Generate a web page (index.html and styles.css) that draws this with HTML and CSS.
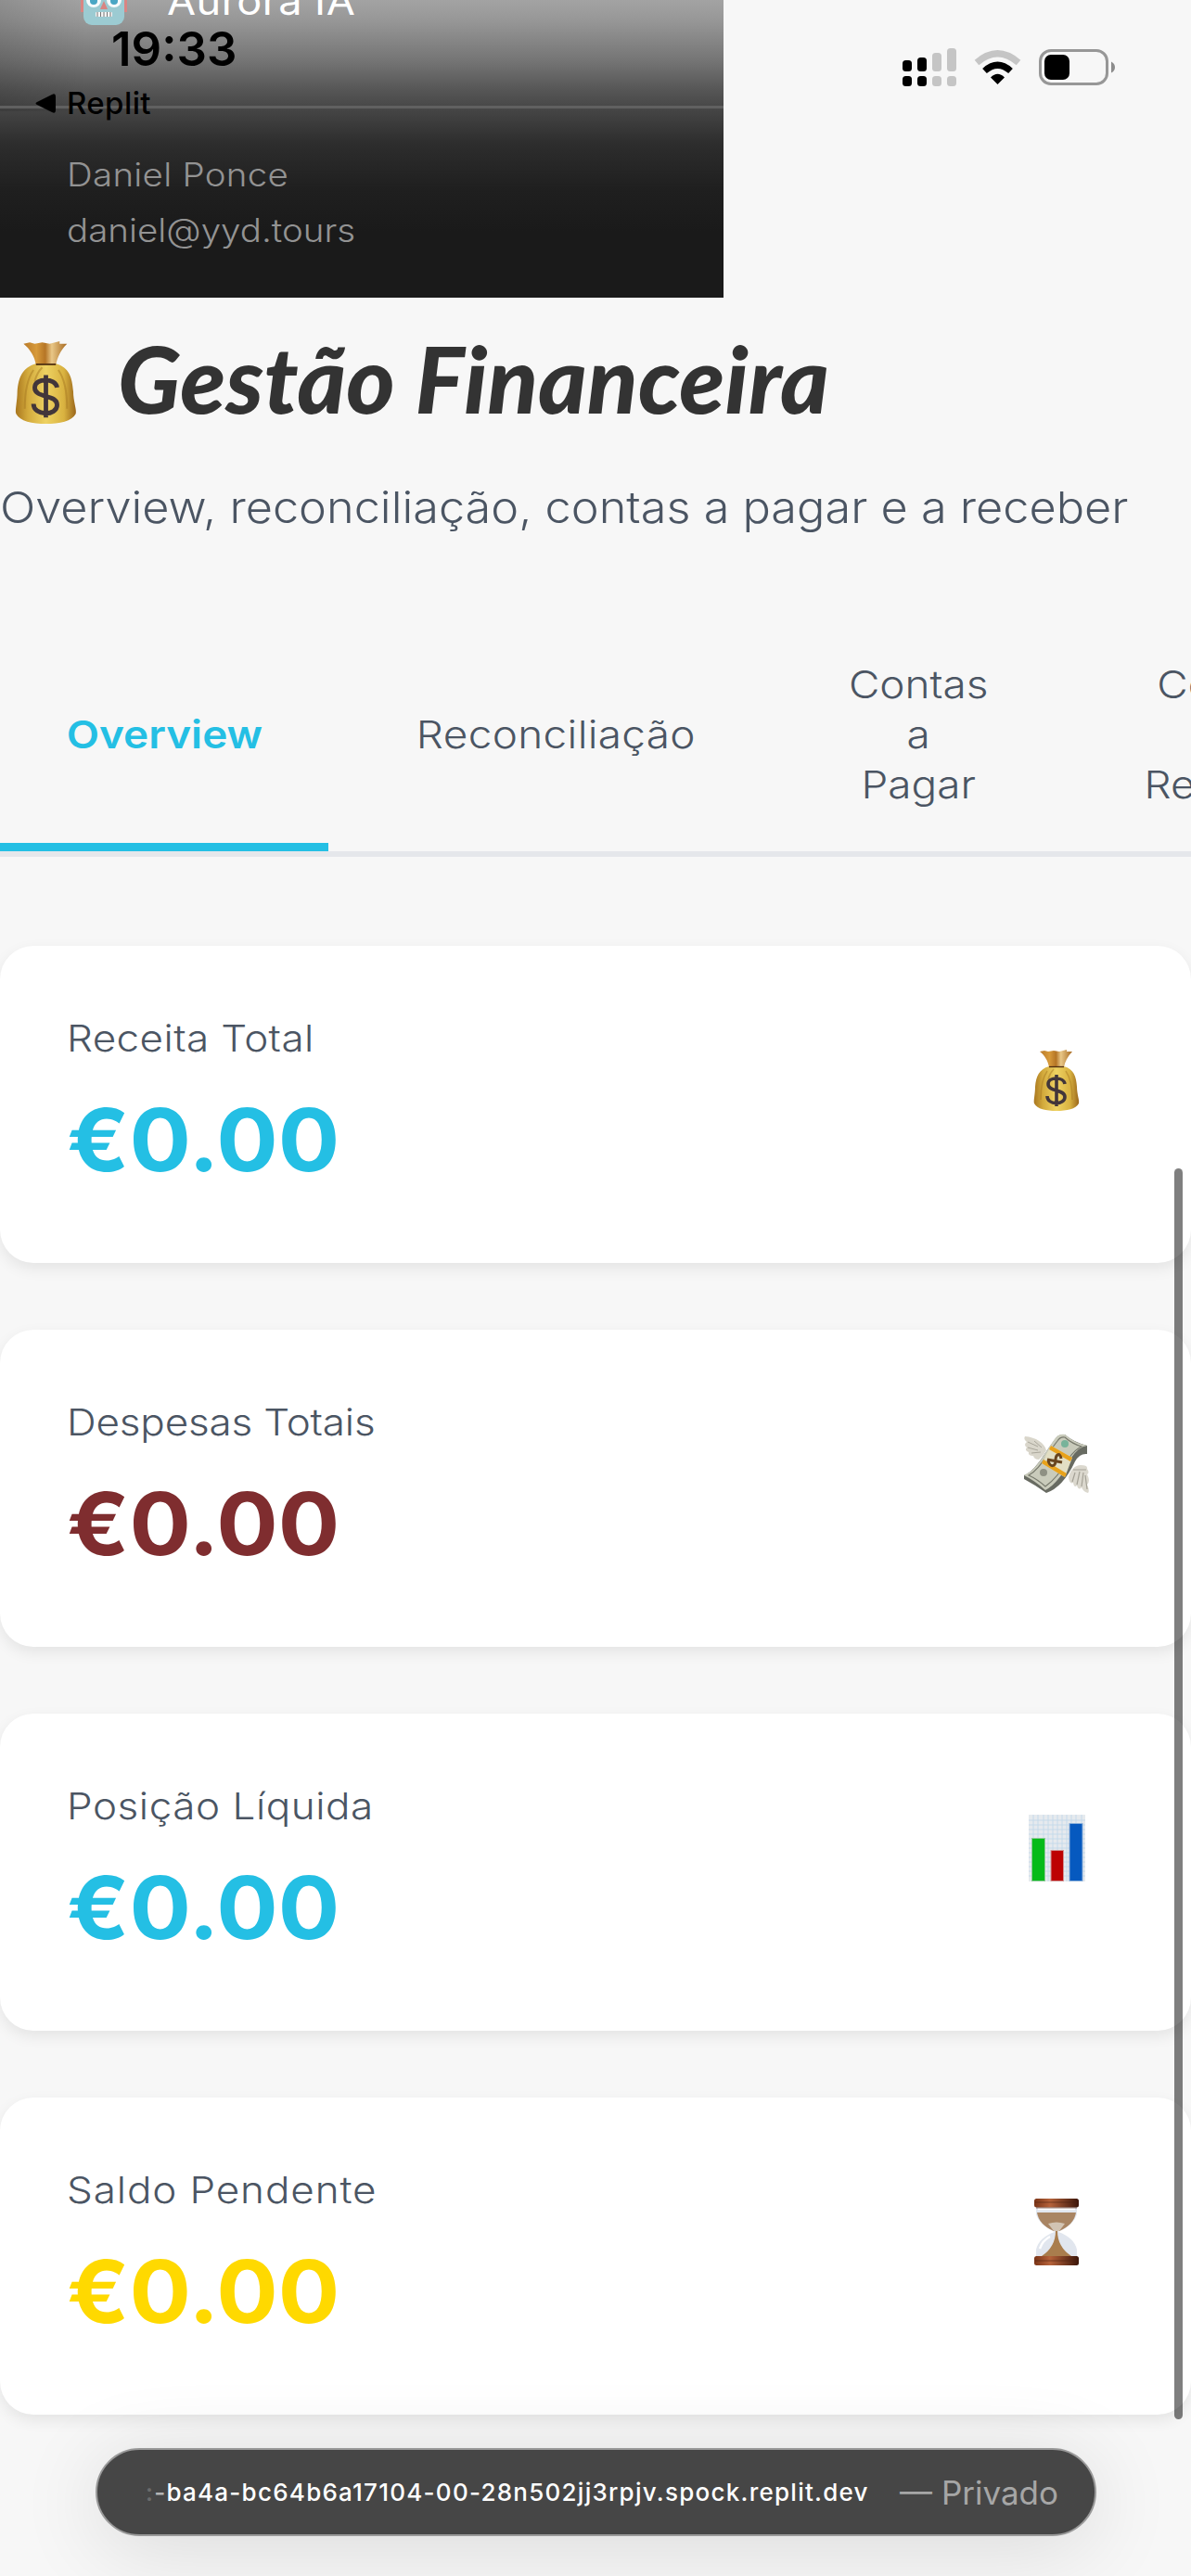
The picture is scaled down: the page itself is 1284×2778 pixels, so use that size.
FILE: index.html
```html
<!DOCTYPE html>
<html lang="pt">
<head>
<meta charset="utf-8">
<title>Gestão Financeira</title>
<link rel="stylesheet" href="styles.css">
</head>
<body>
<svg class="defs" width="0" height="0" aria-hidden="true">
  <defs>
    <linearGradient id="gold" x1="0" x2="1">
      <stop offset="0" stop-color="#a9771f"/><stop offset=".2" stop-color="#d3aa3c"/><stop offset=".5" stop-color="#eed262"/><stop offset=".8" stop-color="#d9b240"/><stop offset="1" stop-color="#9a661b"/>
    </linearGradient>
    <linearGradient id="neck" x1="0" x2="1">
      <stop offset="0" stop-color="#b97a2a"/><stop offset=".3" stop-color="#d79a3a"/><stop offset=".5" stop-color="#b57526"/><stop offset=".65" stop-color="#e9c787"/><stop offset="1" stop-color="#a7691f"/>
    </linearGradient>
    <linearGradient id="wood" x1="0" x2="1">
      <stop offset="0" stop-color="#7a3417"/><stop offset=".35" stop-color="#b5623a"/><stop offset="1" stop-color="#3b1509"/>
    </linearGradient>
    <symbol id="bag" viewBox="0 0 50 66" preserveAspectRatio="none">
      <path d="M7 2 12 1 16 2 22 1 28 2 36 0 36 2 42 2C37 7 34 13 33 19H17C16 12 12 6 7 2Z" fill="url(#neck)"/>
      <path d="M17 18H33C44 21 46 29 47 40C47 48 50 55 49 58C46 64 36 66 25 66S4 64 1 58C0 55 2 48 2 40C3 29 6 21 17 18Z" fill="url(#gold)"/>
      <path d="M15 23C10 30 8 40 8 54M22 21C18 25 17 28 16 32M35 23C40 30 42 40 42 54" fill="none" stroke="#a87a22" stroke-opacity=".5" stroke-width="1.5"/>
      <path d="M17 18.500H33" stroke="#4d2c10" stroke-width="1.300"/>
      <path d="M34 37C33 29 16 29 16 37C16 46 34 42 34 51C34 60 15 60 15 50M25 27V61" fill="none" stroke="#42363a" stroke-width="3.600"/>
    </symbol>
  </defs>
</svg>

<aside class="sidebar">
  <div class="nav-link">
    <svg class="robot" viewBox="0 0 50 54">
      <path d="M0 16H4V39H0ZM46 16H50V39H46Z" fill="#d98583"/>
      <rect x="3" y="4" width="44" height="49" rx="9" fill="#9ccbd2"/>
      <circle cx="14" cy="26" r="8" fill="#f7fbfc"/><circle cx="36" cy="26" r="8" fill="#f7fbfc"/>
      <circle cx="14" cy="27" r="4" fill="#4aa6c4"/><circle cx="36" cy="27" r="4" fill="#4aa6c4"/>
      <path d="M25 27 29 36H21Z" fill="#d88582"/>
      <rect x="16" y="39" width="18" height="5" rx="1" fill="#f4f4f4"/>
      <path d="M18 39V44M21.500 39V44M25 39V44M28.500 39V44M32 39V44" stroke="#777" stroke-width="1"/>
    </svg>
    <span class="nav-text wide">Aurora IA</span>
  </div>
  <div class="user">
    <div class="wide user-name">Daniel Ponce</div>
    <div class="wide">daniel@yyd.tours</div>
  </div>
</aside>

<main>
  <header class="page-head">
    <h1><svg class="title-icon"><use href="#bag"/></svg><span class="title-text">Gestão Financeira</span></h1>
    <p class="subtitle">Overview, reconciliação, contas a pagar e a receber</p>
  </header>

  <nav class="tabs">
    <a class="tab tab-overview active"><span>Overview</span></a>
    <a class="tab tab-recon"><span>Reconciliação</span></a>
    <a class="tab tab-pay"><span>Contas<br>a<br>Pagar</span></a>
    <a class="tab tab-receive"><span>Contas<br>a<br>Receber</span></a>
  </nav>

  <section class="cards">
    <article class="card">
      <div><div class="label wide">Receita Total</div><div class="value cyan">€0.00</div></div>
      <div class="icon"><svg width="50" height="66"><use href="#bag"/></svg></div>
    </article>
    <article class="card">
      <div><div class="label wide expenses">Despesas Totais</div><div class="value red">€0.00</div></div>
      <div class="icon">
        <svg width="72" height="66" viewBox="0 0 72 66">
          <path d="M1 45C14 40 22 22 36 4Q38 1 45 1Q54 9 69 13V22Q61 21 56 30Q43 58 25 64Q14 56 1 49Z" fill="#686b62"/>
          <path d="M1 45C15 39 21 24 34 6Q38 0 45 1Q55 10 69 13Q60 14 52 26Q39 53 24 61Q13 51 1 45Z" fill="#c9cbbb"/>
          <path d="M6 45C18 38 23 26 37 8Q40 3 45 4Q53 11 63 14Q56 17 49 27Q37 48 24 57Q15 49 6 45Z" fill="none" stroke="#77796c" stroke-width="1.200"/>
          <circle cx="45" cy="11" r="4" fill="#78b39a"/><circle cx="22" cy="42" r="4" fill="#8e9083"/>
          <path d="M30 13 53 26 45 47 20 32Z" fill="#e3dfc4"/>
          <path d="M30 13 53 26 51 30 28 17ZM22 28 47 43 45 47 20 32Z" fill="#e8a21b"/>
          <path d="M41 27C40 20 35 22 35 29S29 37 27 29M26 28 42 31" fill="none" stroke="#68451f" stroke-width="3"/>
          <path d="M25 18C23 10 14 4 2 3Q0 6 4 9Q0 12 4 15Q1 18 6 20Q5 24 11 24Q12 28 17 28L22 23Z" fill="#d9d6cb"/>
          <path d="M5 9 16 14M5 15 16 18M9 21 19 20M12 8 20 15" stroke="#aaa79b" stroke-width="1"/>
          <path d="M49 47C51 39 56 34 62 34Q70 34 69 38Q72 42 69 44Q73 51 69 55Q72 62 70 64Q65 63 63 58Q60 62 58 56Q55 59 54 53Q50 55 49 47Z" fill="#dbd8ce"/>
          <path d="M56 42 53 52M61 41 58 55M65 42 63 57M67 45 69 60M54 39 68 39" stroke="#a5a297" stroke-width="1.200"/>
        </svg>
      </div>
    </article>
    <article class="card">
      <div><div class="label wide position">Posição Líquida</div><div class="value cyan">€0.00</div></div>
      <div class="icon">
        <svg width="61" height="72" viewBox="0 0 61 72">
          <rect width="61" height="72" fill="#e6eaee"/>
          <path d="M0 6H61M0 11H61M0 16H61M0 21H61M0 26H61M0 31H61M0 36H61M0 41H61M0 46H61M0 51H61M0 56H61M0 61H61M0 66H61M5 0V72M10 0V72M16 0V72M21 0V72M26 0V72M31 0V72M36 0V72M41 0V72M46 0V72M51 0V72M57 0V72" stroke="#c3d9ea" stroke-width=".9"/>
          <rect x="3.500" y="25.500" width="14" height="46" fill="#05bb19" stroke="#8cc997"/>
          <rect x="24" y="38.500" width="13.500" height="33" fill="#bd0202" stroke="#cf9292"/>
          <rect x="44" y="9.500" width="14" height="62" fill="#0659bf" stroke="#8bb0da"/>
        </svg>
      </div>
    </article>
    <article class="card">
      <div><div class="label wide balance">Saldo Pendente</div><div class="value yellow">€0.00</div></div>
      <div class="icon">
        <svg width="50" height="72" viewBox="0 0 50 72">
          <path d="M3 9H47V17Q44 28 27 36Q44 42 47 55V63H3V55Q6 42 23 36Q6 28 3 17Z" fill="#e1e6ee"/>
          <path d="M4 15H46Q44 28 28 35H22Q6 28 4 15Z" fill="#a98563"/>
          <path d="M16 27Q25 24 34 27L28 35H22Z" fill="#d2c4b3"/>
          <path d="M24 35H26Q26 52 41 62H9Q24 52 24 35Z" fill="#a97d4d"/>
          <path d="M5 11H45M7 54Q10 45 18 41" stroke="#fff" stroke-width="2.500" fill="none"/>
          <rect x="1" y="0" width="48" height="9.500" rx="2.500" fill="url(#wood)"/>
          <rect x="1" y="62" width="48" height="10" rx="2.500" fill="url(#wood)"/>
          <path d="M3 10H47M2 4H48M2 67H48" stroke="#4c2112" stroke-opacity=".6" stroke-width="1.200"/>
        </svg>
      </div>
    </article>
  </section>
</main>

<div class="status">
  <div class="status-left">
    <div class="clock">19:33</div>
    <div class="back"><svg width="22" height="21" viewBox="0 0 22 21"><path d="M2 9 18 1Q22-1 22 3V18Q22 22 18 20L2 12Q-1 10.500 2 9Z"/></svg><span>Replit</span></div>
  </div>
  <svg class="status-icons" width="230" height="42" viewBox="0 0 230 42">
    <g><rect y="13" width="10" height="12" rx="3.500"/><rect x="16" y="10" width="10" height="15" rx="3.500"/><rect y="30" width="10" height="11" rx="3.500"/><rect x="16" y="30" width="10" height="11" rx="3.500"/></g>
    <g fill="#c5c5c5"><rect x="32" y="5" width="10" height="20" rx="3.500"/><rect x="48" width="10" height="25" rx="3.500"/><rect x="32" y="30" width="10" height="11" rx="3.500"/><rect x="48" y="30" width="10" height="11" rx="3.500"/></g>
    <path d="M80 15.500Q102.500-4 125 15.500" fill="none" stroke="#c5c5c5" stroke-width="7"/>
    <path d="M88.500 24.500Q102.500 12 116.500 24.500" fill="none" stroke="#000" stroke-width="7"/>
    <path d="M95 31.500Q102.500 24 110 31.500L102.500 39Z"/>
    <rect x="148.500" y="2.500" width="72" height="36" rx="11.500" fill="none" stroke="#979797" stroke-width="3"/>
    <rect x="153" y="7" width="27" height="27" rx="7"/>
    <path d="M225 14.500Q229 16.500 229 20.500T225 26.500Z" fill="#8c8c8c"/>
  </svg>
</div>
<div class="scrollbar"></div>
<div class="address">
  <span class="url"><span class="fade">:</span><span class="fade2">-</span>ba4a-bc64b6a17104-00-28n502jj3rpjv.spock.replit.dev</span>
  <span class="private">— Privado</span>
</div>
</body>
</html>
```

FILE: styles.css
```css
* { box-sizing: border-box; }

body {
  position: relative;
  margin: 0;
  width: 1284px;
  height: 2778px;
  overflow: hidden;
  background: #f7f7f7;
  color: #4b5563;
  font-family: Inter, "Liberation Sans", sans-serif;
}

.defs { position: absolute; }

svg { display: block; flex: none; }

.wide {
  width: fit-content;
  transform: scaleX(1.1);
  transform-origin: 0 0;
}

.sidebar {
  display: flex;
  flex-direction: column;
  justify-content: flex-end;
  width: 780px;
  height: 321px;
  overflow: hidden;
  background:
    linear-gradient(90deg, rgba(0, 0, 0, .12), transparent 12%) 0 0 / 100% 120px no-repeat,
    linear-gradient(#a3a3a3 0, #979797 22px, #757575 65px, #555 98px, #444 120px, #2d2d2d 155px, #1f1f1f 205px, #1a1a1a 250px);
}

.nav-link {
  display: flex;
  flex: none;
  align-items: flex-end;
  gap: 43px;
  height: 54px;
  margin-bottom: 86px;
  padding-left: 87px;
}

.robot { width: 50px; height: 54px; }

.nav-text {
  color: #fff;
  font-size: 41px;
  line-height: 54px;
  letter-spacing: .4px;
}

.user {
  flex: none;
  height: 207px;
  padding: 41px 72px;
  border-top: 3px solid #606060;
  color: #939393;
  font-size: 35px;
  font-weight: 350;
  line-height: 60px;
  white-space: nowrap;
}

.user-name { letter-spacing: .25px; }

.page-head { height: 348px; }

h1 {
  display: flex;
  align-items: flex-start;
  height: 190px;
  margin: 0;
  padding: 26px 0 0 16px;
  color: #333;
}

.title-icon { width: 67px; height: 89px; margin-top: 21px; }

.title-text {
  margin-left: 44px;
  font: italic 900 100px/120px Lato, sans-serif;
  letter-spacing: .2px;
  white-space: nowrap;
}

.subtitle {
  width: fit-content;
  margin: 0;
  font-size: 47px;
  font-weight: 350;
  line-height: 72px;
  white-space: nowrap;
  transform: scaleX(1.073);
  transform-origin: 0 0;
}

.tabs {
  display: flex;
  gap: 24px;
  height: 255px;
  overflow: hidden;
  border-bottom: 6px solid #e5e7eb;
}

.tab {
  display: flex;
  flex: none;
  align-items: center;
  justify-content: center;
  padding-top: 6px;
  border-bottom: 9px solid transparent;
  font-size: 41px;
  font-weight: 350;
  line-height: 54px;
  text-align: center;
}

.tab span { transform: scaleX(1.12); }

.tab-overview { width: 354px; }
.tab-recon { width: 442px; margin-right: 2px; letter-spacing: .3px; }
.tab-pay { width: 288px; }
.tab-receive { width: 330px; }

.active {
  border-color: #24bfe4;
  color: #24bfe4;
  font-weight: 600;
}

.cards {
  display: flex;
  flex-direction: column;
  gap: 72px;
  padding-top: 96px;
}

.card {
  display: flex;
  justify-content: space-between;
  height: 342px;
  padding: 70px 72px 72px;
  border-radius: 36px;
  background: #fff;
  box-shadow: 0 6px 16px rgba(0, 0, 0, .08);
}

.label {
  font-size: 40px;
  font-weight: 350;
  line-height: 60px;
  letter-spacing: .35px;
  white-space: nowrap;
}

.expenses { letter-spacing: -.15px; }
.position { letter-spacing: .5px; }
.balance { letter-spacing: .8px; }

.value {
  margin-top: 25px;
  font-size: 94px;
  font-weight: 700;
  line-height: 108px;
  transform: scaleX(1.05);
  transform-origin: 0 0;
}

.cyan { color: #24bfe4; }
.red { color: #7f2d2f; }
.yellow { color: #ffd900; }

.icon {
  display: flex;
  align-items: center;
  justify-content: center;
  width: 146px;
  height: 150px;
}

/* Overlays: system status, scroll indicator, browser address pill */
.status {
  position: absolute;
  top: 0;
  left: 0;
  display: flex;
  justify-content: space-between;
  width: 1284px;
  padding: 22px 81px 0 38px;
  color: #000;
}

.clock {
  padding-left: 82px;
  font-size: 51px;
  font-weight: 600;
  line-height: 62px;
}

.back {
  display: flex;
  align-items: center;
  gap: 12px;
  height: 54px;
  font-size: 33px;
  font-weight: 500;
  letter-spacing: .4px;
}

.status-icons { margin-top: 30px; }

.scrollbar {
  position: absolute;
  top: 1260px;
  left: 1266px;
  width: 9px;
  height: 1349px;
  border-radius: 5px;
  background: rgba(0, 0, 0, .5);
}

.address {
  position: absolute;
  top: 2640px;
  left: 103px;
  display: flex;
  align-items: center;
  justify-content: space-between;
  width: 1079px;
  height: 95px;
  padding: 0 39px 0 52px;
  border: 2px solid #999;
  border-radius: 48px;
  background: #464646;
  box-shadow: 0 12px 90px rgba(0, 0, 0, .12);
  color: #fff;
  white-space: nowrap;
}

.url { font-size: 26px; font-weight: 500; letter-spacing: 1.25px; }
.fade { opacity: .2; }
.fade2 { opacity: .6; }
.private { color: #a6a6a6; font-size: 35px; }
```
